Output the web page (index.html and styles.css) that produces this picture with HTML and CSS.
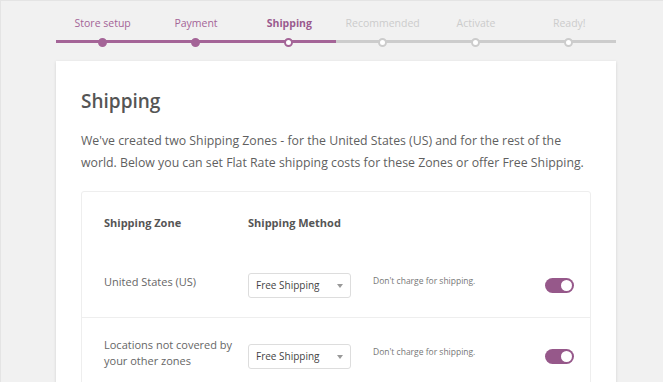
FILE: index.html
```html
<!DOCTYPE html>
<html lang="en">
<head>
    <meta charset="UTF-8">
    <meta name="viewport" content="width=device-width, initial-scale=1.0">
    <title>Setup Wizard - Shipping</title>
    <link rel="stylesheet" href="styles.css">
</head>
<body>
    <div class="wizard">
        <ol class="steps">
            <li class="step done">Store setup</li>
            <li class="step done">Payment</li>
            <li class="step active">Shipping</li>
            <li class="step">Recommended</li>
            <li class="step">Activate</li>
            <li class="step">Ready!</li>
        </ol>

        <div class="card">
            <h1>Shipping</h1>
            <p class="intro">We've created two Shipping Zones - for the United States (US) and for the rest of the world. Below you can set Flat Rate shipping costs for these Zones or offer Free Shipping.</p>

            <div class="zones">
                <div class="zone-row head">
                    <div>Shipping Zone</div>
                    <div>Shipping Method</div>
                    <div></div>
                    <div></div>
                </div>

                <div class="zone-row">
                    <div class="zone-name">United States (US)</div>
                    <div class="select">Free Shipping <span class="caret"></span></div>
                    <div class="desc">Don't charge for shipping.</div>
                    <div class="toggle on"><span class="knob"></span></div>
                </div>

                <div class="zone-row">
                    <div class="zone-name">Locations not covered by your other zones</div>
                    <div class="select">Free Shipping <span class="caret"></span></div>
                    <div class="desc">Don't charge for shipping.</div>
                    <div class="toggle on"><span class="knob"></span></div>
                </div>
            </div>
        </div>
    </div>
</body>
</html>
```

FILE: styles.css
```css
html, body {
    height: 100%;
}

body {
    margin: 0;
    background: #f1f1f1;
    font-family: "Open Sans", "Noto Sans", sans-serif;
    color: #555;
    border-top: 1px solid #e4e4e4;
    border-left: 1px solid #e4e4e4;
    box-sizing: border-box;
    overflow: hidden;
}

.wizard {
    width: 560px;
    margin-left: 55px;
}

/* progress steps */
.steps {
    display: flex;
    list-style: none;
    margin: 0;
    padding: 15px 0 0;
}

.step {
    flex: 1;
    position: relative;
    text-align: center;
    font-size: 10.5px;
    color: #ccc;
    height: 14px;
    padding-bottom: 10px;
    border-bottom: 3px solid #ccc;
}

.step::after {
    content: "";
    position: absolute;
    left: 50%;
    bottom: -7px;
    margin-left: -5px;
    width: 5px;
    height: 5px;
    border: 2.5px solid #ccc;
    border-radius: 50%;
    background: #fff;
}

.step.done,
.step.active {
    color: #a46497;
    border-bottom-color: #a46497;
}

.step.done::after {
    background: #a46497;
    border-color: #a46497;
}

.step.active {
    font-weight: 700;
    color: #9a5a8e;
}

.step.active::after {
    border-color: #a46497;
}

/* card */
.card {
    margin-top: 18px;
    background: #fff;
    padding: 24px 25px 40px 25px;
    box-shadow: 0 1px 3px rgba(0, 0, 0, 0.13);
}

h1 {
    margin: 3px 0 0;
    font-size: 19px;
    font-weight: 600;
    color: #555;
    line-height: 26px;
}

.intro {
    margin: 16px 0 0;
    font-size: 12.3px;
    line-height: 22px;
    color: #5f5f5f;
}

/* zones table */
.zones {
    margin-top: 17px;
    border: 1px solid #eee;
    border-radius: 3px;
}

.zone-row {
    display: grid;
    grid-template-columns: 144px 125px 1fr auto;
    align-items: center;
    padding: 0 16px 0 22px;
    font-size: 11px;
    color: #666;
}

.zone-row + .zone-row + .zone-row {
    border-top: 1px solid #eee;
}

.zone-row.head {
    height: 60px;
    align-items: start;
    padding-top: 23px;
    box-sizing: border-box;
    font-weight: 700;
    color: #555;
}

.zone-row:nth-child(2) {
    height: 64px;
    padding-top: 1px;
}

.zone-row:nth-child(3) {
    height: 76px;
}

.zone-name {
    line-height: 16px;
    padding-right: 8px;
    margin-bottom: 6px;
}

.select {
    position: relative;
    width: 103px;
    height: 25px;
    box-sizing: border-box;
    border: 1px solid #ddd;
    border-radius: 3px;
    padding-left: 7px;
    font-size: 10px;
    line-height: 23px;
    color: #444;
}

.caret {
    position: absolute;
    right: 7px;
    top: 10px;
    border-left: 3px solid transparent;
    border-right: 3px solid transparent;
    border-top: 4px solid #999;
}

.desc {
    font-size: 8.5px;
    color: #777;
    align-self: center;
    margin-bottom: 10px;
}

.toggle {
    position: relative;
    width: 29px;
    height: 15px;
    border-radius: 8px;
    background: #96588a;
}

.knob {
    position: absolute;
    right: 2px;
    top: 2px;
    width: 11px;
    height: 11px;
    border-radius: 50%;
    background: #fff;
}
```
